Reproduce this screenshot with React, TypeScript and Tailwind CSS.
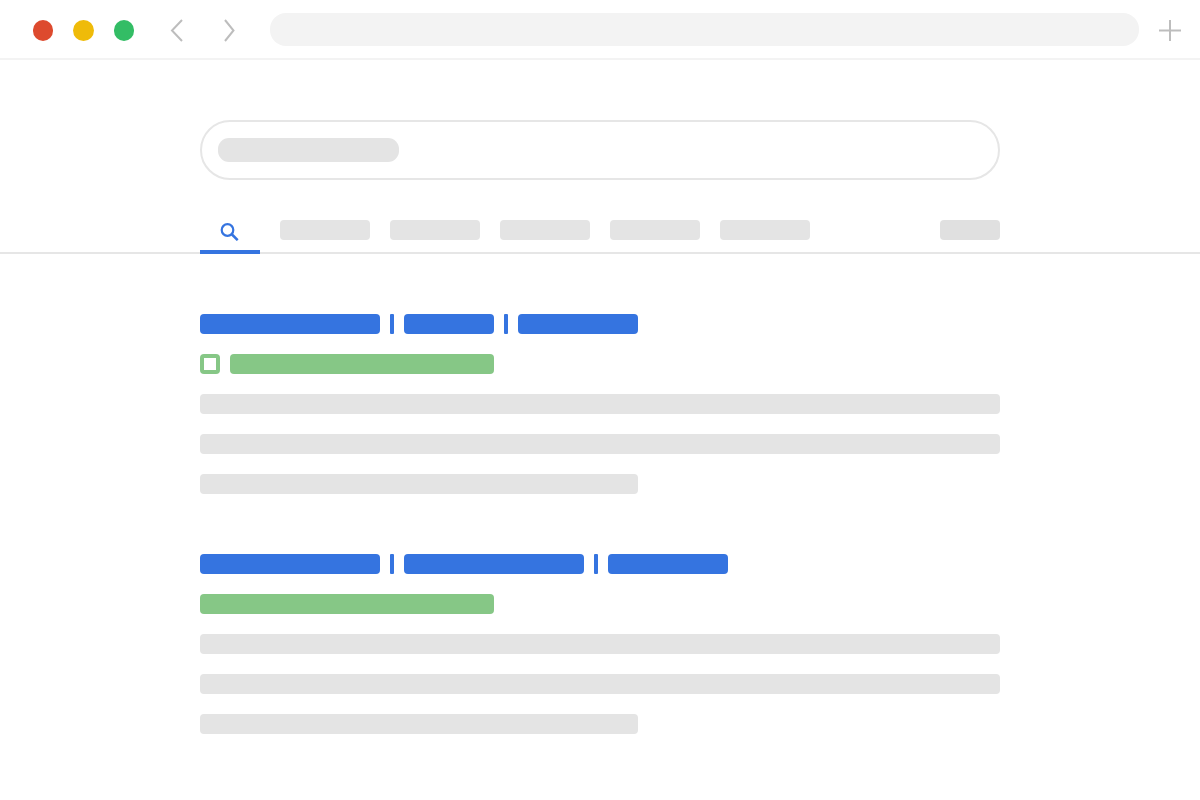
import React from "react";

const Blue = ({ w }: { w: string }) => <div className={`h-5 rounded-[4px] bg-[#3574e0] ${w}`} />;

function Sep() {
  return <div className="h-5 w-1 rounded-[1px] bg-[#3574e0]" />;
}

function Lines() {
  return (
    <>
      <div className="h-5 w-[800px] rounded-[4px] bg-[#e4e4e4]" />
      <div className="h-5 w-[800px] rounded-[4px] bg-[#e4e4e4]" />
      <div className="h-5 w-[438px] rounded-[4px] bg-[#e4e4e4]" />
    </>
  );
}

export default function App() {
  return (
    <div className="h-[800px] w-[1200px] overflow-hidden bg-white font-['Liberation_Sans',sans-serif]">
      <header className="flex h-[60px] items-center border-b-2 border-[#f3f3f3] pl-[33px] pr-[19px] pt-[2px]">
        <div className="flex items-center gap-5">
          <div className="mt-[0.5px] h-[20.5px] w-5 rounded-full bg-[#dd4a2e]" />
          <div className="mt-[0.5px] h-[20.5px] w-[20.5px] rounded-full bg-[#efbb09]" />
          <div className="mt-[0.5px] h-[20.5px] w-[20.5px] rounded-full bg-[#33bd65]" />
        </div>
        <svg className="ml-[33px] shrink-0" width="20" height="26" viewBox="0 0 20 26" fill="none" stroke="#bdbdbd" strokeWidth="2">
          <path d="M15 3 L5 13.5 L15 24" />
        </svg>
        <svg className="ml-[33px] shrink-0" width="20" height="26" viewBox="0 0 20 26" fill="none" stroke="#bdbdbd" strokeWidth="2">
          <path d="M5 3 L13.5 13.5 L5 24" />
        </svg>
        <div className="mb-px ml-[30px] h-[33px] w-[869px] shrink-0 rounded-[16px] bg-[#f3f3f3]" />
        <svg className="ml-[20px] shrink-0" width="22" height="22" viewBox="0 0 22 22" fill="none" stroke="#bdbdbd" strokeWidth="2">
          <path d="M11 1 V22 M0 11.5 H22" />
        </svg>
      </header>

      <div className="mx-auto mt-[60px] flex h-[60px] w-[800px] items-center rounded-[30px] border-2 border-[#e6e6e6] pl-4">
        <div className="h-6 w-[181px] rounded-[11px] bg-[#e4e4e4]" />
      </div>

      <nav className="mt-10 h-[34px] border-b-2 border-[#e6e6e6]">
        <div className="mx-auto flex h-[34px] w-[800px] items-start">
          <div className="flex h-[34px] w-[60px] justify-center border-b-4 border-[#3574e0]">
            <svg className="mt-[1px] -ml-[2px]" width="20" height="20" viewBox="0 0 20 20" fill="none" stroke="#3574e0" strokeWidth="2.2">
              <circle cx="8.5" cy="9" r="5.8" />
              <path d="M12.5 13 L18.7 19.2" strokeWidth="2.5" />
            </svg>
          </div>
          <div className="ml-5 flex gap-5">
            <div className="h-5 w-[90px] rounded-[4px] bg-[#e4e4e4]" />
            <div className="h-5 w-[90px] rounded-[4px] bg-[#e4e4e4]" />
            <div className="h-5 w-[90px] rounded-[4px] bg-[#e4e4e4]" />
            <div className="h-5 w-[90px] rounded-[4px] bg-[#e4e4e4]" />
            <div className="h-5 w-[90px] rounded-[4px] bg-[#e4e4e4]" />
          </div>
          <div className="ml-auto h-5 w-[60px] rounded-[4px] bg-[#e0e0e0]" />
        </div>
      </nav>

      <main className="mx-auto mt-[60px] flex w-[800px] flex-col gap-[60px]">
        <section className="flex flex-col gap-5">
          <div className="flex gap-[10px]">
            <Blue w="w-[180px]" />
            <Sep />
            <Blue w="w-[90px]" />
            <Sep />
            <Blue w="w-[120px]" />
          </div>
          <div className="flex gap-[10px]">
            <div className="flex h-5 w-5 items-center justify-center rounded-[4px] bg-[#86c786]">
              <div className="h-3 w-3 bg-white" />
            </div>
            <div className="h-5 w-[264px] rounded-[4px] bg-[#86c786]" />
          </div>
          <Lines />
        </section>
        <section className="flex flex-col gap-5">
          <div className="flex gap-[10px]">
            <Blue w="w-[180px]" />
            <Sep />
            <Blue w="w-[180px]" />
            <Sep />
            <Blue w="w-[120px]" />
          </div>
          <div className="h-5 w-[294px] rounded-[4px] bg-[#86c786]" />
          <Lines />
        </section>
      </main>
    </div>
  );
}
